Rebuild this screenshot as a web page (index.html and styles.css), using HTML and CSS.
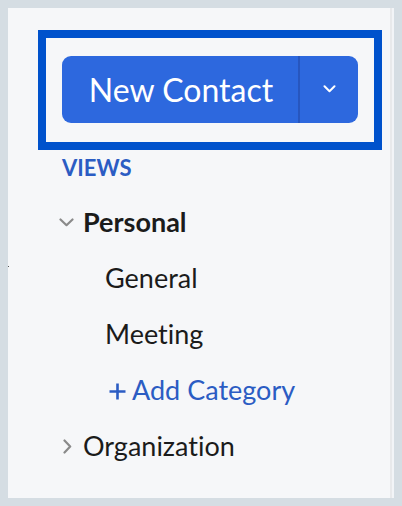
FILE: index.html
```html
<!DOCTYPE html>
<html>
<head>
<meta charset="utf-8">
<link rel="stylesheet" href="styles.css">
</head>
<body>
<div class="frame">
  <div class="panel">
    <div class="focus-box">
      <div class="split-btn">
        <button class="btn-main">New Contact</button>
        <span class="btn-divider"></span>
        <button class="btn-drop" aria-label="More">
          <svg width="13" height="8" viewBox="0 0 13 8"><path d="M1.5 1.2 L6.5 6.2 L11.5 1.2" fill="none" stroke="#fff" stroke-width="2" stroke-linecap="round" stroke-linejoin="round"/></svg>
        </button>
      </div>
    </div>
    <div class="views-label">VIEWS</div>
    <ul class="tree">
      <li class="row group open">
        <span class="caret">
          <svg width="15" height="9" viewBox="0 0 15 9"><path d="M1.5 1.5 L7.5 7.2 L13.5 1.5" fill="none" stroke="#8a8a8a" stroke-width="2.2" stroke-linecap="round" stroke-linejoin="round"/></svg>
        </span>
        <span class="label bold">Personal</span>
      </li>
      <li class="row child"><span class="label">General</span></li>
      <li class="row child"><span class="label">Meeting</span></li>
      <li class="row child add">
        <svg class="plus" width="17" height="17" viewBox="0 0 17 17"><path d="M8.5 0.5 V16.5 M0.5 8.5 H16.5" fill="none" stroke="#2b5cc3" stroke-width="2.6"/></svg>
        <span class="label">Add Category</span>
      </li>
      <li class="row group">
        <span class="caret caret-right">
          <svg width="9" height="15" viewBox="0 0 9 15"><path d="M1.5 1.5 L7.2 7.5 L1.5 13.5" fill="none" stroke="#8a8a8a" stroke-width="2.2" stroke-linecap="round" stroke-linejoin="round"/></svg>
        </span>
        <span class="label">Organization</span>
      </li>
    </ul>
    <span class="speck"></span>
  </div>
  <div class="scroll-edge"><span class="edge-a"></span><span class="edge-b"></span></div>
</div>
</body>
</html>
```

FILE: styles.css
```css
* { box-sizing: border-box; }
html, body { margin: 0; padding: 0; }
body {
  background: #d5dde3;
  width: 402px;
  height: 506px;
  overflow: hidden;
  font-family: Lato, "Noto Sans", sans-serif;
  font-variant-ligatures: none;
}
.frame {
  display: flex;
  margin: 8px 0 0 8px;
  height: 490px;
}
.panel {
  position: relative;
  width: 382px;
  height: 490px;
  background: #f6f7f9;
  padding: 22px 0 0 30px;
}
.scroll-edge {
  display: flex;
  height: 490px;
}
.edge-a { width: 2px; background: #e8e9eb; }
.edge-b { width: 2px; background: #f2f4f7; }
.focus-box {
  width: 344px;
  height: 120px;
  border: 8px solid #0052cc;
  padding: 18px 16px 0 16px;
}
.split-btn {
  display: flex;
  height: 67px;
  width: 296px;
  background: #2d68de;
  border-radius: 9px;
  overflow: hidden;
}
.btn-main, .btn-drop {
  border: 0;
  margin: 0;
  padding: 0;
  background: transparent;
  color: #fff;
  font-family: Lato, "Noto Sans", sans-serif;
}
.btn-main {
  width: 236px;
  font-size: 32px;
  line-height: 67px;
  text-align: center;
  padding-left: 2px;
}
.btn-divider {
  width: 2px;
  background: #2756bf;
}
.btn-drop {
  flex: 1;
  display: flex;
  align-items: center;
  justify-content: center;
  padding-bottom: 2px;
}
.views-label {
  margin: 6px 0 0 24px;
  font-size: 22px;
  font-weight: 700;
  line-height: 24px;
  color: #2b5cc3;
}
.tree {
  list-style: none;
  margin: 14px 0 0 0;
  padding: 0;
}
.row {
  display: flex;
  align-items: center;
  height: 56px;
  line-height: 56px;
  font-size: 27px;
  color: #1b1b1b;
}
.row.group { padding-left: 21px; }
.caret {
  width: 24px;
  display: flex;
  align-items: center;
}
.caret-right { padding-left: 4px; }
.label.bold { font-weight: 700; }
.row.child { padding-left: 67px; }
.row.add { color: #2b5cc3; padding-left: 71px; }
.plus {
  margin: 2px 6px 0 0;
}
.speck {
  position: absolute;
  left: 0;
  top: 258px;
  width: 1px;
  height: 1px;
  background: #555;
}
```
